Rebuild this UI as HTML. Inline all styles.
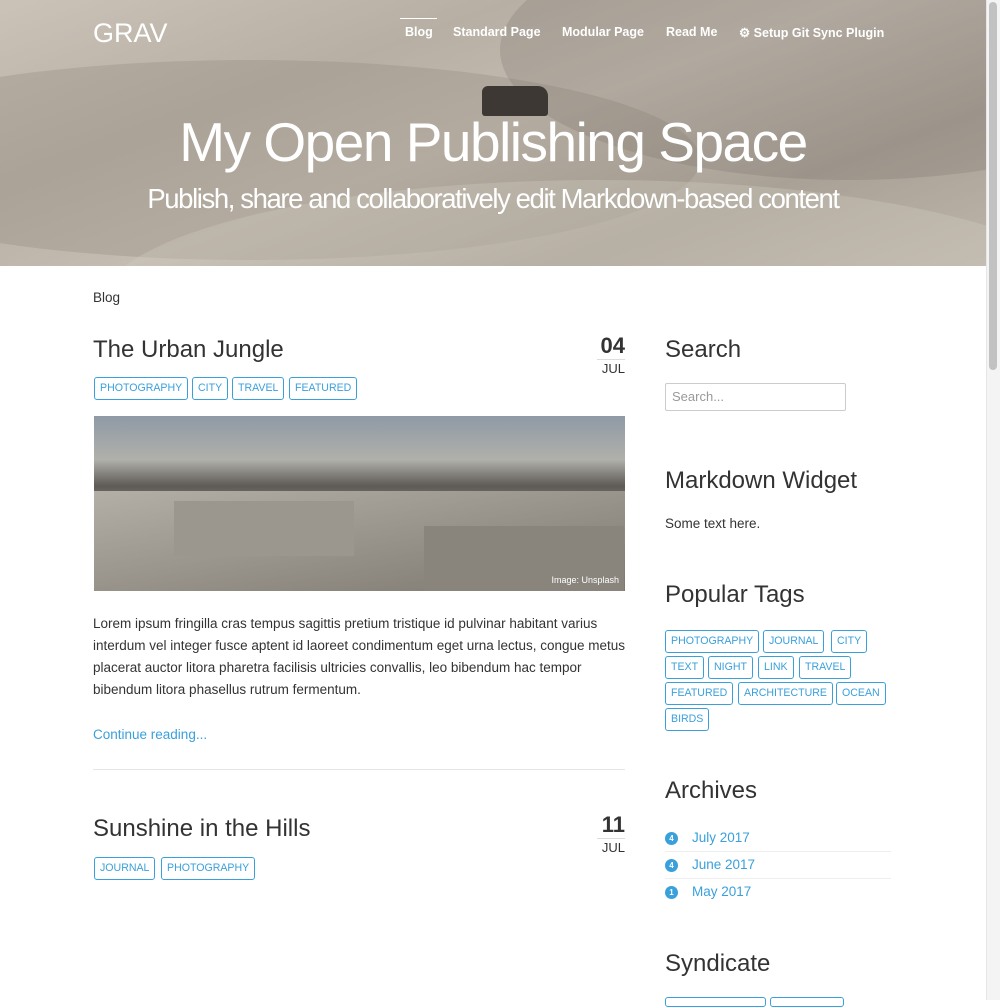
<!DOCTYPE html>
<html><head><meta charset="utf-8"><style>
*{box-sizing:border-box;margin:0;padding:0}
body{width:1000px;height:1000px;overflow:hidden;background:#fff;font-family:"Liberation Sans",sans-serif;color:#333;position:relative}
.hero{position:absolute;left:0;top:0;width:986px;height:266px;background:linear-gradient(160deg,#cbc3b8 0%,#b7afa4 30%,#c4bcb1 50%,#a9a196 75%,#bdb5aa 100%);overflow:hidden}
.dune{position:absolute;border-radius:50%}
.logo{position:absolute;left:93px;top:18px;color:#fff;font-size:27px}
.nav{position:absolute;top:25px;color:#fff;font-size:12.5px;font-weight:bold}
.navline{position:absolute;left:400px;top:18px;width:37px;height:1px;background:#fff}
h1{position:absolute;left:0;width:986px;top:110px;text-align:center;color:#fff;font-weight:normal;font-size:55px;letter-spacing:-1.5px}
.sub{position:absolute;left:0;width:986px;top:183px;text-align:center;color:#fff;font-size:27.5px;letter-spacing:-1.4px}
.abs{position:absolute}
.h2{font-size:24px;color:#333}
.tag{position:absolute;height:23px;border:1px solid #3aa0db;border-radius:3px;color:#3aa0db;font-size:10.6px;line-height:21px;padding:0 5px;white-space:nowrap}
.p{font-size:13.5px;line-height:22px;color:#333}
.link{color:#3aa0db}
.scroll{position:absolute;left:986px;top:0;width:14px;height:1000px;background:#f4f4f4;border-left:1px solid #e6e6e6}
.thumb{position:absolute;left:989px;top:2px;width:8px;height:368px;background:#c2c2c2;border-radius:4px}
.arch{position:absolute;left:665px;width:226px;height:27px;font-size:13.5px;color:#3aa0db}
.arch i{position:absolute;left:0;top:7px;width:13px;height:13px;border-radius:50%;background:#3aa0db;color:#fff;font-size:8px;font-style:normal;text-align:center;line-height:13px;font-weight:bold}
.arch span{position:absolute;left:27px;top:5px}
</style></head><body>
<div class="hero">
<div class="dune" style="left:-200px;top:60px;width:900px;height:200px;background:rgba(150,140,128,.35)"></div>
<div class="dune" style="left:500px;top:-80px;width:700px;height:260px;background:rgba(120,112,102,.25)"></div>
<div class="dune" style="left:100px;top:180px;width:1000px;height:250px;background:rgba(210,203,193,.35)"></div>
<div class="abs" style="left:482px;top:86px;width:66px;height:30px;background:#3d3834;border-radius:6px 10px 3px 3px"></div>
<div class="logo">GRAV</div>
<div class="navline"></div>
<div class="nav" style="left:405px">Blog</div>
<div class="nav" style="left:453px">Standard Page</div>
<div class="nav" style="left:562px">Modular Page</div>
<div class="nav" style="left:666px">Read Me</div>
<div class="nav" style="left:739px">⚙ Setup Git Sync Plugin</div>
<h1>My Open Publishing Space</h1>
<div class="sub">Publish, share and collaboratively edit Markdown-based content</div>
</div>
<div class="abs" style="left:93px;top:290px;font-size:13.5px">Blog</div>

<div class="abs h2" style="left:93px;top:336px">The Urban Jungle</div>
<div class="abs" style="left:597px;top:333px;font-size:22px;font-weight:bold;width:28px;text-align:right">04</div>
<div class="abs" style="left:597px;top:359px;width:28px;border-top:1px solid #ddd;font-size:13px;text-align:right;padding-top:1px">JUL</div>
<div class="tag" style="left:94px;top:377px">PHOTOGRAPHY</div>
<div class="tag" style="left:192px;top:377px">CITY</div>
<div class="tag" style="left:232px;top:377px">TRAVEL</div>
<div class="tag" style="left:289px;top:377px">FEATURED</div>
<div class="abs" style="left:94px;top:416px;width:531px;height:175px;background:linear-gradient(180deg,#8f9aa6 0%,#b0b0aa 25%,#5e5a55 40%,#8b877f 55%,#a29e96 75%,#6e6b66 100%);overflow:hidden">
<div class="abs" style="left:0;top:75px;width:531px;height:100px;background:linear-gradient(170deg,#b4afa6,#7d7870)"></div>
<div class="abs" style="left:80px;top:85px;width:180px;height:55px;background:#9c978e"></div>
<div class="abs" style="left:330px;top:110px;width:200px;height:65px;background:#8a857c"></div>
<div class="abs" style="right:6px;bottom:6px;color:#fff;font-size:9px">Image: Unsplash</div>
</div>
<div class="abs p" style="left:93px;top:613px;width:535px">Lorem ipsum fringilla cras tempus sagittis pretium tristique id pulvinar habitant varius interdum vel integer fusce aptent id laoreet condimentum eget urna lectus, congue metus placerat auctor litora pharetra facilisis ultricies convallis, leo bibendum hac tempor bibendum litora phasellus rutrum fermentum.</div>
<div class="abs link" style="left:93px;top:727px;font-size:13.5px">Continue reading...</div>
<div class="abs" style="left:93px;top:769px;width:532px;border-top:1px solid #e6e6e6"></div>

<div class="abs h2" style="left:93px;top:815px">Sunshine in the Hills</div>
<div class="abs" style="left:597px;top:812px;font-size:22px;font-weight:bold;width:28px;text-align:right">11</div>
<div class="abs" style="left:597px;top:838px;width:28px;border-top:1px solid #ddd;font-size:13px;text-align:right;padding-top:1px">JUL</div>
<div class="tag" style="left:94px;top:857px">JOURNAL</div>
<div class="tag" style="left:161px;top:857px">PHOTOGRAPHY</div>

<div class="abs h2" style="left:665px;top:336px">Search</div>
<div class="abs" style="left:665px;top:383px;width:181px;height:28px;border:1px solid #ccc;border-radius:2px;font-size:13px;color:#999;padding:5px 6px">Search...</div>
<div class="abs h2" style="left:665px;top:467px">Markdown Widget</div>
<div class="abs" style="left:665px;top:516px;font-size:13.5px">Some text here.</div>
<div class="abs h2" style="left:665px;top:581px">Popular Tags</div>
<div class="tag" style="left:665px;top:630px">PHOTOGRAPHY</div>
<div class="tag" style="left:763px;top:630px">JOURNAL</div>
<div class="tag" style="left:831px;top:630px">CITY</div>
<div class="tag" style="left:665px;top:656px">TEXT</div>
<div class="tag" style="left:708px;top:656px">NIGHT</div>
<div class="tag" style="left:758px;top:656px">LINK</div>
<div class="tag" style="left:799px;top:656px">TRAVEL</div>
<div class="tag" style="left:665px;top:682px">FEATURED</div>
<div class="tag" style="left:738px;top:682px">ARCHITECTURE</div>
<div class="tag" style="left:836px;top:682px">OCEAN</div>
<div class="tag" style="left:665px;top:708px">BIRDS</div>
<div class="abs h2" style="left:665px;top:777px">Archives</div>
<div class="arch" style="top:825px;border-bottom:1px solid #eee"><i>4</i><span>July 2017</span></div>
<div class="arch" style="top:852px;border-bottom:1px solid #eee"><i>4</i><span>June 2017</span></div>
<div class="arch" style="top:879px"><i>1</i><span>May 2017</span></div>
<div class="abs h2" style="left:665px;top:950px">Syndicate</div>
<div class="abs" style="left:665px;top:997px;width:101px;height:10px;border:1px solid #3aa0db;border-radius:3px"></div>
<div class="abs" style="left:770px;top:997px;width:74px;height:10px;border:1px solid #3aa0db;border-radius:3px"></div>
<div class="scroll"></div><div class="thumb"></div>
</body></html>
